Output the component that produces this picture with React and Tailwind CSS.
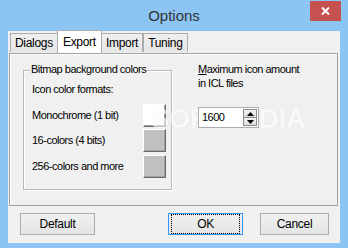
import React from "react";

const font = { fontFamily: '"Liberation Sans", Arial, sans-serif' };

const ColorButton = ({ white }) => (
  <div
    className={
      "w-[23px] h-[23px] border-t border-l border-white border-b border-r border-b-[#696969] border-r-[#696969] shadow-[inset_-1px_-1px_0_#a0a0a0] " +
      (white ? "bg-white" : "bg-[#c0c0c0]")
    }
  />
);

const Tab = ({ label, active }) =>
  active ? (
    <div className="h-[23px] w-[45px] -mx-[1px] relative z-10 bg-white border border-b-0 border-[#acacac] flex items-center justify-center text-[12px] tracking-[-0.3px]">
      {label}
    </div>
  ) : (
    <div className="h-[19px] mb-[1px] px-[4px] bg-gradient-to-b from-[#f0f0f0] to-[#e5e5e5] border border-b-0 border-[#acacac] flex items-center justify-center text-[12px] tracking-[-0.3px]">
      {label}
    </div>
  );

const PushButton = ({ label, primary, className }) => (
  <div
    className={
      "h-[22px] flex items-center justify-center text-[12px] tracking-[-0.3px] bg-gradient-to-b from-[#f0f0f0] to-[#e5e5e5] border " +
      (primary ? "border-[#3399ff] " : "border-[#acacac] ") +
      (className || "")
    }
  >
    {primary ? (
      <div className="w-full h-full m-[2px] border border-dotted border-black flex items-center justify-center">
        {label}
      </div>
    ) : (
      label
    )}
  </div>
);

export default function App() {
  return (
    <div className="w-[348px] h-[248px] bg-[#8cc4f4] flex flex-col text-black" style={font}>
      <div className="h-[31px] relative flex items-center justify-center">
        <span className="text-[15px] text-[#333] pt-[1px]">Options</span>
        <div className="absolute right-[7px] top-[1px] w-[31px] h-[20px] bg-[#c75050] flex items-center justify-center">
          <svg width="9" height="8" viewBox="0 0 9 8">
            <path d="M1 0.5 L8 7.5 M8 0.5 L1 7.5" stroke="white" strokeWidth="2" />
          </svg>
        </div>
      </div>
      <div className="mx-[8px] h-[212px] bg-[#f0f0f0] flex flex-col">
        <div className="flex items-end h-[22px] pl-[2px] relative">
          <Tab label="Dialogs" />
          <Tab label="Export" active />
          <Tab label="Import" />
          <Tab label="Tuning" />
        </div>
        <div className="ml-[1px] w-[329px] h-[153px] border border-[#a0a0a0] shadow-[inset_1px_1px_0_#fff] relative flex pt-[16px] pl-[13px]">
          <div className="relative w-[149px] h-[120px] border border-[#b9b9b9] shadow-[inset_1px_1px_0_#fff,1px_1px_0_#fff] pl-[8px] pt-[12px] text-[11px] tracking-[-0.5px]">
            <span className="absolute left-[6px] -top-[8px] px-[1px] bg-[#f0f0f0] leading-[13px]">
              Bitmap background colors
            </span>
            <div className="h-[13px] leading-[13px]">Icon color formats:</div>
            <div className="flex items-center justify-between h-[23px] mt-[8px] pr-[5px]">
              <span>Monochrome (1 bit)</span>
              <ColorButton white />
            </div>
            <div className="flex items-center justify-between h-[23px] mt-[2px] pr-[5px]">
              <span>16-colors (4 bits)</span>
              <ColorButton />
            </div>
            <div className="flex items-center justify-between h-[23px] mt-[3px] pr-[5px]">
              <span>256-colors and more</span>
              <ColorButton />
            </div>
          </div>
          <span className="absolute left-[141px] top-[50px] text-[27px] leading-[30px] font-bold text-white opacity-60 pointer-events-none [text-shadow:0_0_1px_#d0d0d0]">
            SOFTPEDIA<span className="text-[9px] align-top">®</span>
          </span>
          <div className="relative z-10 ml-[26px] text-[11px] tracking-[-0.5px] -mt-[8px]">
            <div className="leading-[14px]">
              <span className="underline">M</span>aximum icon amount
            </div>
            <div className="leading-[14px]">in ICL files</div>
            <div className="mt-[17px] w-[61px] h-[21px] border border-[#abadb3] bg-white flex items-center pl-[3px] pr-[1px]">
              <span className="flex-1">1600</span>
              <div className="flex flex-col w-[14px] h-[17px]">
                <div className="flex-1 bg-gradient-to-b from-[#f2f2f2] to-[#dcdcdc] border border-[#8d8d8d] flex items-center justify-center">
                  <svg width="7" height="4" viewBox="0 0 7 4"><path d="M3.5 0 L7 4 L0 4 Z" fill="black" /></svg>
                </div>
                <div className="flex-1 bg-gradient-to-b from-[#f2f2f2] to-[#dcdcdc] border border-t-0 border-[#8d8d8d] flex items-center justify-center">
                  <svg width="7" height="4" viewBox="0 0 7 4"><path d="M0 0 L7 0 L3.5 4 Z" fill="black" /></svg>
                </div>
              </div>
            </div>
          </div>
        </div>
        <div className="flex items-start mt-[7px] pl-[12px]">
          <PushButton label="Default" className="w-[75px]" />
          <PushButton label="OK" primary className="w-[75px] ml-[73px]" />
          <PushButton label="Cancel" className="w-[69px] ml-[17px]" />
        </div>
      </div>
    </div>
  );
}
